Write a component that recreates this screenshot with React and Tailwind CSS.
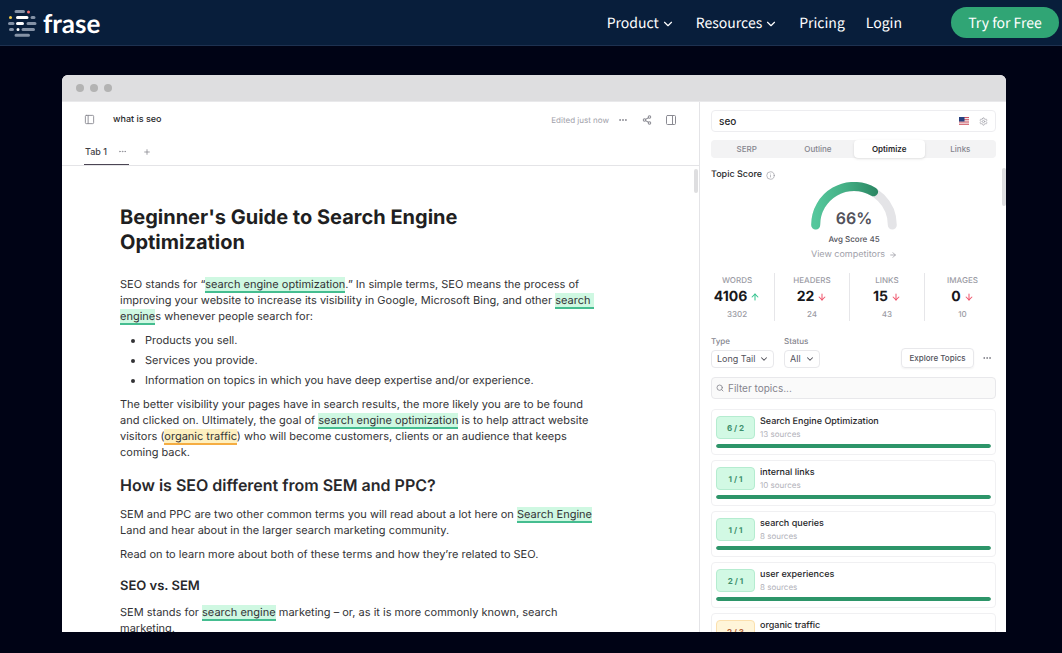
import { useState } from 'react';
import {
  ArrowDown, ArrowRight, ArrowUp, ChevronDown, Ellipsis, Info,
  PanelLeft, PanelRight, Plus, Search, Settings, Share2,
} from 'lucide-react';
import clsx from 'clsx';

const NAV_LINKS = [
  { label: 'Product', menu: true },
  { label: 'Resources', menu: true },
  { label: 'Pricing' },
  { label: 'Login' },
];

const PANEL_TABS = ['SERP', 'Outline', 'Optimize', 'Links'];

const STATS = [
  { label: 'WORDS', value: '4106', average: '3302', up: true },
  { label: 'HEADERS', value: '22', average: '24' },
  { label: 'LINKS', value: '15', average: '43' },
  { label: 'IMAGES', value: '0', average: '10' },
];

const TOPICS = [
  { name: 'Search Engine Optimization', count: '6 / 2', sources: 13, progress: 100 },
  { name: 'internal links', count: '1 / 1', sources: 10, progress: 100 },
  { name: 'search queries', count: '1 / 1', sources: 8, progress: 100 },
  { name: 'user experiences', count: '2 / 1', sources: 8, progress: 100 },
  { name: 'organic traffic', count: '2 / 3', sources: 8, progress: 66, warn: true },
];

function LogoMark() {
  return (
    <svg width="30" height="28" viewBox="0 0 30 28" fill="none" strokeWidth="3" strokeLinecap="round" aria-hidden="true">
      <g stroke="#8492a6">
        <path d="M9 2.5h7.5M25 8.5h2M2.5 14.5h3.5M21 14.5h7M3.5 20.5h2M16 20.5h10.5M9 26.3h12.5" />
      </g>
      <g stroke="#fff">
        <path d="M10.5 8.5h9.5M10.5 14.5h5M11 20.5h.01" />
      </g>
      <path stroke="#f0706f" d="M21.5 3h.01" />
      <path stroke="#f5cf4b" d="M3.5 8.5h.01" />
    </svg>
  );
}

function Header() {
  return (
    <header className="flex h-[46px] shrink-0 items-center justify-between border-b border-[#1d3150] bg-[#081e3b] pl-[7px] pr-[3px] text-white">
      <a href="#home" className="flex items-center gap-[6px]">
        <LogoMark />
        <span className="font-['Lato',sans-serif] text-[26px] font-bold leading-[26px]">frase</span>
      </a>
      <div className="flex items-center gap-[49px] font-['Noto_Sans_CJK_JP',sans-serif] text-[14px] leading-[20px]">
        <nav className="flex items-center gap-[21px]">
          {NAV_LINKS.map((link) => (
            <a key={link.label} href={`#${link.label.toLowerCase()}`} className="flex items-center gap-[2px]">
              {link.label}
              {link.menu && <ChevronDown size={14} strokeWidth={2} className="mt-[3px]" />}
            </a>
          ))}
        </nav>
        <a href="#trial" className="flex h-[31px] w-[108px] items-center justify-center rounded-full bg-[#30a575]">
          Try for Free
        </a>
      </div>
    </header>
  );
}

function Mark({ children, warn }) {
  return (
    <mark
      className={clsx(
        'border-b-2 text-inherit',
        warn ? 'border-[#f5ad42] bg-[#fef0c0]' : 'border-[#45bd90] bg-[#cff8e2]'
      )}
    >
      {children}
    </mark>
  );
}

function EditorBar() {
  return (
    <div className="shrink-0 border-b border-[#e4e4e7] px-[22px]">
      <div className="flex h-[35px] items-center text-[#8b8b93]">
        <button aria-label="Toggle documents">
          <PanelLeft size={11} strokeWidth={2} />
        </button>
        <span className="ml-[18px] pt-px text-[9px] font-medium text-[#27272a]">what is seo</span>
        <span className="ml-auto text-[8px] text-[#a1a1aa]">Edited just now</span>
        <button aria-label="More" className="ml-[9px]">
          <Ellipsis size={10} strokeWidth={2.5} />
        </button>
        <button aria-label="Share" className="ml-[14px]">
          <Share2 size={10} strokeWidth={2.5} />
        </button>
        <button aria-label="Toggle panel" className="ml-[13px]">
          <PanelRight size={12} strokeWidth={2} />
        </button>
      </div>
      <div className="flex h-7 items-stretch text-[#8b8b93]">
        <button className="flex items-center gap-[11px] border-b border-[#4b4553] pl-px pr-[2px] pt-[2px] text-[9px] font-medium text-[#3f3f46]">
          Tab 1
          <Ellipsis size={9} strokeWidth={2} className="text-[#8b8b93]" />
        </button>
        <button aria-label="Add tab" className="ml-[14px] pt-px">
          <Plus size={8} strokeWidth={2.5} />
        </button>
      </div>
    </div>
  );
}

function Article() {
  return (
    <article className="max-w-[536px] pl-[58px] pt-[39px] text-[11px] leading-4 text-[#333336]">
      <h1 className="text-[20px] font-bold leading-[25px] text-[#1f1f22]">
        Beginner's Guide to Search Engine
        <br />
        Optimization
      </h1>
      <p className="mt-[21px]">
        SEO stands for “<Mark>search engine optimization</Mark>.” In simple terms, SEO means the process of
        improving your website to increase its visibility in Google, Microsoft Bing, and other{' '}
        <Mark>search{'\u00a0'}</Mark>
        <br />
        <Mark>engine</Mark>s whenever people search for:
      </p>
      <ul className="mt-2 list-disc space-y-1 pl-[25px]">
        <li>Products you sell.</li>
        <li>Services you provide.</li>
        <li>Information on topics in which you have deep expertise and/or experience.</li>
      </ul>
      <p className="mt-2">
        The better visibility your pages have in search results, the more likely you are to be found
        and clicked on. Ultimately, the goal of <Mark>search engine optimization</Mark> is to help attract website
        visitors (<Mark warn>organic traffic</Mark>) who will become customers, clients or an audience that keeps
        coming back.
      </p>
      <h2 className="mt-[13px] text-[16px] font-semibold leading-6 text-[#28282b]">
        How is SEO different from SEM and PPC?
      </h2>
      <p className="mt-[9px]">
        SEM and PPC are two other common terms you will read about a lot here on <Mark>Search Engine</Mark>{' '}
        Land and hear about in the larger search marketing community.
      </p>
      <p className="mt-2">Read on to learn more about both of these terms and how they’re related to SEO.</p>
      <h3 className="mt-[14px] text-[13px] font-semibold leading-5 text-[#28282b]">SEO vs. SEM</h3>
      <p className="mt-2">
        SEM stands for <Mark>search engine</Mark> marketing – or, as it is more commonly known, search marketing.
      </p>
    </article>
  );
}

function ScoreGauge() {
  return (
    <div className="relative ml-[2px] flex flex-col items-center">
      <svg width="86" height="48" viewBox="0 0 86 48" fill="none" strokeWidth="9" strokeLinecap="round" aria-hidden="true">
        <defs>
          <linearGradient id="score" x1="4" y1="0" x2="66" y2="0" gradientUnits="userSpaceOnUse">
            <stop stopColor="#55c79c" />
            <stop offset="0.5" stopColor="#43ae84" />
            <stop offset="1" stopColor="#2b8763" />
          </linearGradient>
        </defs>
        <path stroke="#e4e4e7" d="M4.7 43a38.3 38.3 0 0 1 76.6 0" />
        <path stroke="url(#score)" d="M4.7 43a38.3 38.3 0 0 1 57.9-33.2" />
      </svg>
      <span className="absolute top-[26px] text-[16px] font-semibold leading-5 text-[#52525b]">66%</span>
      <span className="mt-[3px] text-[8px] font-medium leading-[12px] text-[#52525b]">Avg Score 45</span>
      <a href="#competitors" className="mt-1 flex items-center gap-1 text-[9px] leading-[12px] text-[#a1a1aa]">
        View competitors
        <ArrowRight size={8} strokeWidth={2.5} />
      </a>
    </div>
  );
}

function Stats() {
  return (
    <div className="mr-[6px] mt-3 grid grid-cols-4 divide-x divide-[#e6e6e9] text-center text-[8px] leading-[14px] text-[#9b9ba4]">
      {STATS.map((stat) => (
        <div key={stat.label} className="h-12">
          <div className="font-medium">{stat.label}</div>
          <div className="flex h-[20px] items-center justify-center gap-[3px] text-[14px] font-bold text-[#18181b]">
            {stat.value}
            {stat.up
              ? <ArrowUp size={10} strokeWidth={2.5} className="text-[#34c38f]" />
              : <ArrowDown size={10} strokeWidth={2.5} className="text-[#f0596f]" />}
          </div>
          <div className="font-medium">{stat.average}</div>
        </div>
      ))}
    </div>
  );
}

function FilterSelect({ id, label, value, width }) {
  return (
    <div className="flex flex-col gap-[3px]">
      <label htmlFor={id} className="text-[8px] font-medium leading-[12px] text-[#85858e]">{label}</label>
      <div className={clsx('relative flex', width)}>
        <select
          id={id}
          defaultValue={value}
          className="h-[18px] w-full appearance-none rounded border border-[#e8e8eb] bg-white pl-[5px] text-[9px] leading-[14px] text-[#52525b]"
        >
          <option>{value}</option>
        </select>
        <ChevronDown size={10} strokeWidth={2.5} className="pointer-events-none absolute right-[5px] top-1 text-[#52525b]" />
      </div>
    </div>
  );
}

function TopicCard({ topic }) {
  return (
    <li className="h-[46px] shrink-0 rounded border border-[#f0f0f2] px-1 pt-[6px]">
      <div className="flex gap-[5px]">
        <span
          className={clsx(
            'flex h-[23px] w-[39px] items-center justify-center rounded border text-[8px] font-bold',
            topic.warn ? 'border-[#fbe0ae] bg-[#fff5d9] text-[#b4643a]' : 'border-[#b5ecd0] bg-[#d2f9e4] text-[#3d8f6c]'
          )}
        >
          {topic.count}
        </span>
        <div>
          <div className="text-[9px] font-medium leading-[12px] text-[#27272a]">{topic.name}</div>
          <div className="text-[8px] leading-[12px] text-[#b1b1b9]">{topic.sources} sources</div>
        </div>
      </div>
      <div className="mt-1 h-1 overflow-hidden rounded-full bg-[#e4e4e7]">
        <div
          className={clsx('h-full rounded-full', topic.warn ? 'bg-[#f5ad42]' : 'bg-[#2d9569]')}
          style={{ width: `${topic.progress}%` }}
        />
      </div>
    </li>
  );
}

function OptimizePanel() {
  const [activeTab, setActiveTab] = useState('Optimize');

  return (
    <aside className="relative flex w-[307px] shrink-0 flex-col overflow-hidden border-l border-[#e4e4e7]">
      <div className="ml-[11px] mr-[10px] mt-2 flex h-[22px] shrink-0 items-center rounded border border-[#ededf0] px-[7px]">
        <input
          aria-label="Search query"
          defaultValue="seo"
          className="min-w-0 flex-1 text-[10px] font-medium text-[#27272a] outline-none"
        />
        {/* US flag */}
        <svg width="10" height="8" viewBox="0 0 10 8" className="mr-[10px]">
          <path fill="#f3e4e6" d="M0 0h10v8H0z" />
          <path stroke="#cf5562" strokeWidth="1" d="M0 .5h10M0 2.7h10M0 5h10M0 7.3h10" />
          <path fill="#27417f" d="M0 0h5.5v4.5H0z" />
        </svg>
        <button aria-label="Settings">
          <Settings size={9} strokeWidth={2} className="text-[#a1a1aa]" />
        </button>
      </div>

      <div className="ml-[11px] mr-[10px] mt-2 flex h-[18px] shrink-0 rounded bg-[#f3f3f4]">
        {PANEL_TABS.map((tab) => (
          <button
            key={tab}
            onClick={() => setActiveTab(tab)}
            className={clsx(
              'flex-1 rounded text-[8px]',
              tab === activeTab ? 'bg-white font-semibold text-[#27272a] shadow-sm' : 'font-medium text-[#85858e]'
            )}
          >
            {tab}
          </button>
        ))}
      </div>

      <div className="ml-[11px] mt-[9px] flex h-[15px] items-center gap-1 text-[9px] font-medium text-[#27272a]">
        Topic Score
        <Info size={9} strokeWidth={1.5} className="mt-[2px] text-[#85858e]" />
      </div>
      <ScoreGauge />
      <Stats />

      <div className="ml-[11px] mr-[14px] mt-[14px] flex items-end">
        <FilterSelect id="type" label="Type" value="Long Tail" width="w-[63px]" />
        <div className="w-[10px]" />
        <FilterSelect id="status" label="Status" value="All" width="w-9" />
        <button className="ml-auto h-5 w-[73px] rounded border border-[#e8e8eb] text-[8px] font-medium text-[#52525b] shadow-xs">
          Explore Topics
        </button>
        <button aria-label="More topic actions" className="mb-[5px] ml-2">
          <Ellipsis size={10} strokeWidth={2} className="text-[#71717a]" />
        </button>
      </div>

      <label className="ml-[11px] mr-[10px] mt-[9px] flex h-[22px] shrink-0 items-center gap-1 rounded border border-[#e8e8eb] bg-[#fafafa] px-1">
        <Search size={8} strokeWidth={2.5} className="text-[#85858e]" />
        <input
          aria-label="Filter topics"
          placeholder="Filter topics..."
          className="min-w-0 flex-1 text-[10px] outline-none placeholder:text-[#85858e]"
        />
      </label>

      <ul className="ml-[11px] mr-[10px] mt-[10px] flex min-h-0 flex-1 flex-col gap-[5px] overflow-hidden">
        {TOPICS.map((topic) => (
          <TopicCard key={topic.name} topic={topic} />
        ))}
      </ul>
      <div className="absolute right-0 top-[66px] h-[38px] w-1 rounded-full bg-[#dedee0]" />
    </aside>
  );
}

export default function App() {
  return (
    <div className="flex h-screen flex-col bg-[#000315] font-['Inter',sans-serif] [text-rendering:geometricPrecision]">
      <Header />
      <main className="flex min-h-0 flex-1 pb-[21px] pl-[62px] pr-14 pt-[29px]">
        <div className="flex min-w-0 flex-1 flex-col overflow-hidden rounded-t-md bg-white">
          <div className="flex h-[27px] shrink-0 items-center gap-[6px] border-b border-[#e9e9eb] bg-[#dedee0] pl-[14px]">
            <span className="size-2 rounded-full bg-[#b3b3b3]" />
            <span className="size-2 rounded-full bg-[#b3b3b3]" />
            <span className="size-2 rounded-full bg-[#b3b3b3]" />
          </div>
          <div className="flex min-h-0 flex-1">
            <section className="flex min-w-0 flex-1 flex-col">
              <EditorBar />
              <div className="relative min-h-0 flex-1 overflow-hidden">
                <Article />
                <div className="absolute right-px top-[3px] h-6 w-1 rounded-full bg-[#dedee0]" />
              </div>
            </section>
            <OptimizePanel />
          </div>
        </div>
      </main>
    </div>
  );
}
